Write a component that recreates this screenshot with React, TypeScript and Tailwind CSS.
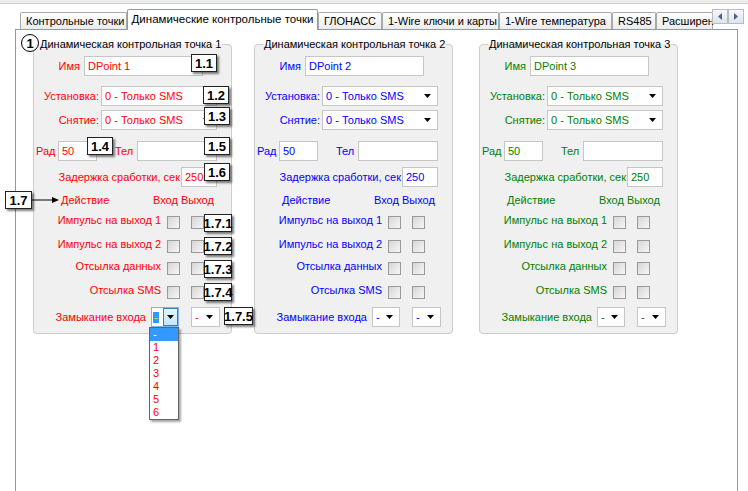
import React from 'react'

type Tone = { text: string }

const TONES: Record<number, Tone> = {
  1: { text: 'text-[#ff0000]' },
  2: { text: 'text-[#0000ff]' },
  3: { text: 'text-[#008000]' },
}

const TABS = [
  { label: 'Контрольные точки', w: 'w-[107px]' },
  { label: 'Динамические контрольные точки', w: 'w-[191px]', active: true },
  { label: 'ГЛОНАСС', w: 'w-[64px]' },
  { label: '1-Wire ключи и карты', w: 'w-[117px]' },
  { label: '1-Wire температура', w: 'w-[113px]' },
  { label: 'RS485', w: 'w-[44px]' },
  { label: 'Расширен', w: 'w-[57px]' },
]

function Arrow() {
  return (
    <svg width="7" height="4" viewBox="0 0 7 4" className="shrink-0">
      <path d="M0 0h7L3.5 4z" fill="#000" />
    </svg>
  )
}

function Box({ w, text, tone, arrow }: { w: string; text?: string; tone: Tone; arrow?: boolean }) {
  return (
    <div className={`h-[20px] ${w} shrink-0 bg-white border border-[#c6c6c6] flex items-center justify-between pl-[3px] pr-[6px] ${tone.text}`}>
      <span className="whitespace-nowrap">{text}</span>
      {arrow && <Arrow />}
    </div>
  )
}

function Check({ className = '' }: { className?: string }) {
  return (
    <div className={`w-[13px] h-[13px] shrink-0 border border-[#9a9a9a] bg-linear-to-br from-[#d6d6d6] to-[#f6f6f6] ${className}`} />
  )
}

// focused combobox (group 1, first "Замыкание входа")
function FocusedCombo() {
  return (
    <div className="h-[20px] w-[28px] ml-[5px] shrink-0 bg-white border border-[#7eb4ea] flex">
      <div className="flex-1 flex items-center pl-[1px]">
        <span className="bg-[#3399ff] text-[#ffcc66] leading-[11px] px-[1px]">-</span>
      </div>
      <div className="w-[15px] h-full border border-[#3c7fb1] bg-linear-to-b from-[#e5f4fc] to-[#c4e5f6] flex items-center justify-center">
        <Arrow />
      </div>
    </div>
  )
}

function Group({ n, first }: { n: number; first?: boolean }) {
  const tone = TONES[n]
  const actions = ['Импульс на выход 1', 'Импульс на выход 2', 'Отсылка данных', 'Отсылка SMS']
  const gaps = ['mt-[8px]', 'mt-[11px]', 'mt-[9px]', 'mt-[11px]']
  return (
    <fieldset className="w-[199px] shrink-0 bg-[#f0f0f0] border border-[#cdcdcd] rounded-[4px] pb-[6px]">
      <legend className={`${first ? 'ml-[5px]' : 'ml-[8px]'} px-[1px] leading-[13px] text-black whitespace-nowrap`}>
        Динамическая контрольная точка {n}
      </legend>

      {/* Имя */}
      <div className="mt-[5px] h-[20px] flex items-center">
        <span className={`w-[46px] text-right ${tone.text}`}>Имя</span>
        <div className="ml-[4px]">
          <Box w="w-[119px]" text={`DPoint ${n}`} tone={tone} />
        </div>
      </div>

      {/* Установка / Снятие */}
      <div className="mt-[10px] h-[20px] flex items-center">
        <span className={`w-[65px] text-right whitespace-nowrap ${tone.text}`}>Установка:</span>
        <div className="ml-[2px]">
          <Box w="w-[116px]" text="0 - Только SMS" tone={tone} arrow />
        </div>
      </div>
      <div className="mt-[4px] h-[20px] flex items-center">
        <span className={`w-[65px] text-right whitespace-nowrap ${tone.text}`}>Снятие:</span>
        <div className="ml-[2px]">
          <Box w="w-[116px]" text="0 - Только SMS" tone={tone} arrow />
        </div>
      </div>

      {/* Рад / Тел */}
      <div className="mt-[11px] h-[20px] flex items-center pl-[2px]">
        <span className={`w-[22px] ${tone.text}`}>Рад</span>
        <Box w="w-[39px]" text="50" tone={tone} />
        <span className={`ml-[18px] w-[22px] ${tone.text}`}>Тел</span>
        <Box w="w-[80px]" tone={tone} />
      </div>

      {/* Задержка */}
      <div className="mt-[6px] h-[20px] flex items-center">
        <span className={`w-[146px] text-right whitespace-nowrap ${tone.text}`}>Задержка сработки, сек</span>
        <div className="ml-[1px]">
          <Box w="w-[36px]" text="250" tone={tone} />
        </div>
      </div>

      {/* Заголовок действий */}
      <div className="mt-[5px] h-[16px] flex items-center pl-[27px]">
        <span className={`w-[92px] ${tone.text}`}>Действие</span>
        <span className={`whitespace-nowrap ${tone.text}`}>Вход Выход</span>
      </div>

      {actions.map((a, i) => (
        <div key={a} className={`${gaps[i]} h-[13px] flex items-center`}>
          <span className={`w-[127px] text-right whitespace-nowrap mb-[4px] ${tone.text}`}>{a}</span>
          <Check className="ml-[6px]" />
          <Check className="ml-[11px]" />
        </div>
      ))}

      {/* Замыкание входа */}
      <div className="mt-[8px] h-[20px] flex items-center">
        <span className={`w-[112px] text-right whitespace-nowrap ${tone.text}`}>Замыкание входа</span>
        {first ? (
          <FocusedCombo />
        ) : (
          <div className="ml-[5px]">
            <Box w="w-[28px]" text="-" tone={tone} arrow />
          </div>
        )}
        <div className="ml-[12px]">
          <Box w="w-[29px]" text="-" tone={tone} arrow />
        </div>
      </div>
    </fieldset>
  )
}

function Badge({ t, className }: { t: string; className: string }) {
  return (
    <div
      className={`absolute z-20 h-[18px] bg-white border border-[#222] shadow-[2px_2px_2px_rgba(0,0,0,0.5)] flex items-center justify-center font-bold text-[13px] leading-none text-black whitespace-nowrap ${className}`}
    >
      {t}
    </div>
  )
}

export default function App() {
  return (
    <div className="relative w-[748px] h-[491px] overflow-hidden bg-white font-['Liberation_Sans',Arial,sans-serif] text-[11px] text-black flex flex-col">
      <div className="h-[4px] shrink-0 bg-[#ececec] border-b border-[#cfcfcf]" />

      {/* tab strip */}
      <div className="h-[25px] shrink-0 flex items-end">
        <div className="ml-[20px] w-[692px] h-full flex items-end">
          {TABS.map((t) =>
            t.active ? (
              <div
                key={t.label}
                className={`${t.w} shrink-0 h-[21px] -mb-px relative z-10 bg-white border border-b-0 border-[#8f9ba0] rounded-t-[2px] flex items-center justify-center whitespace-nowrap text-[11.5px]`}
              >
                {t.label}
              </div>
            ) : (
              <div
                key={t.label}
                className={`${t.w} shrink-0 h-[17px] bg-linear-to-b from-white to-[#ececec] border border-b-0 border-[#a7a9aa] rounded-t-[2px] flex items-center pl-[5px] whitespace-nowrap`}
              >
                {t.label}
              </div>
            )
          )}
        </div>
        <div className="self-start mt-[5px] flex">
          <div className="w-[16px] h-[15px] border border-[#b6bcc6] bg-linear-to-b from-[#f7f9fc] to-[#dde3ec] flex items-center justify-center">
            <svg width="4" height="7" viewBox="0 0 4 7"><path d="M4 0v7L0 3.5z" fill="#4d6185" /></svg>
          </div>
          <div className="w-[16px] h-[15px] border border-[#b6bcc6] bg-linear-to-b from-[#f7f9fc] to-[#dde3ec] flex items-center justify-center">
            <svg width="4" height="7" viewBox="0 0 4 7"><path d="M0 0v7l4-3.5z" fill="#4d6185" /></svg>
          </div>
        </div>
      </div>

      {/* tab page */}
      <div className="ml-[15px] w-[723px] flex-1 border-l border-r border-t border-[#8f9ba0] bg-white">
        <div className="mt-[8px] ml-[17px] flex items-start">
          <Group n={1} first />
          <div className="ml-[22px]">
            <Group n={2} />
          </div>
          <div className="ml-[26px]">
            <Group n={3} />
          </div>
        </div>
      </div>

      {/* callouts */}
      <div className="absolute left-[21px] top-[34px] z-20 w-[18px] h-[18px] rounded-full border-[1.5px] border-black bg-white flex items-center justify-center font-bold text-[13px] leading-none">
        1
      </div>
      <Badge t="1.1" className="left-[191px] top-[54px] w-[26px]" />
      <Badge t="1.2" className="left-[203px] top-[86px] w-[26px]" />
      <Badge t="1.3" className="left-[204px] top-[107px] w-[26px]" />
      <Badge t="1.4" className="left-[87px] top-[137px] w-[26px]" />
      <Badge t="1.5" className="left-[204px] top-[137px] w-[26px]" />
      <Badge t="1.6" className="left-[204px] top-[163px] w-[26px]" />
      <Badge t="1.7" className="left-[5px] top-[191px] w-[27px]" />
      <svg className="absolute left-[32px] top-[196px] z-20" width="28" height="8" viewBox="0 0 28 8">
        <path d="M0 4h21" stroke="#000" strokeWidth="1" />
        <path d="M20 1l7 3-7 3z" fill="#000" />
      </svg>
      <Badge t="1.7.1" className="left-[204px] top-[214px] w-[28px]" />
      <Badge t="1.7.2" className="left-[204px] top-[237px] w-[28px]" />
      <Badge t="1.7.3" className="left-[204px] top-[260px] w-[28px]" />
      <Badge t="1.7.4" className="left-[204px] top-[283px] w-[28px]" />
      <Badge t="1.7.5" className="left-[224px] top-[307px] w-[29px]" />

      {/* open dropdown list */}
      <div className="absolute left-[149px] top-[327px] z-20 w-[30px] bg-white border border-[#646464] shadow-[2px_2px_2px_rgba(0,0,0,0.35)] text-[#ff0000]">
        <div className="h-[13px] leading-[13px] pl-[3px] bg-[#3399ff] text-white">-</div>
        {['1', '2', '3', '4', '5', '6'].map((v) => (
          <div key={v} className="h-[13px] leading-[13px] pl-[3px]">{v}</div>
        ))}
      </div>
    </div>
  )
}
